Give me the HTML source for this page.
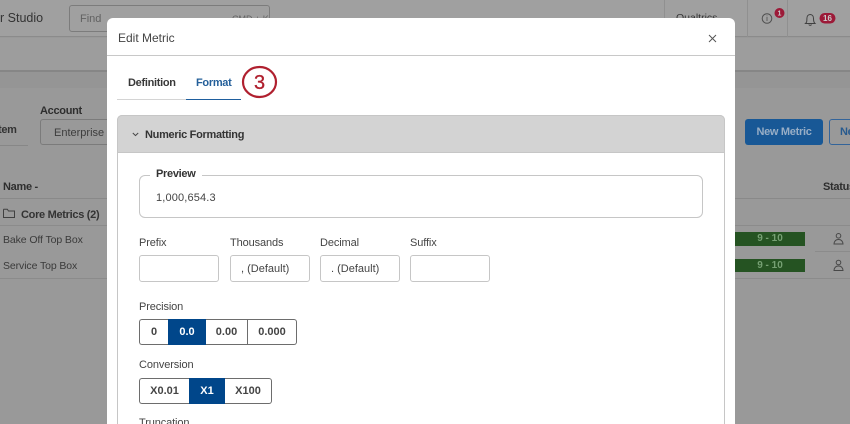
<!DOCTYPE html>
<html style="height:424px;overflow:hidden"><head><meta charset="utf-8">
<style>
html,body{margin:0;padding:0}
body{width:850px;height:424px;background:#999;font-family:"Liberation Sans",sans-serif;color:#2b2b2b;font-size:11px}
#w{position:absolute;left:0;top:0;width:850px;height:424px;overflow:hidden;background:#999}
.a{position:absolute;white-space:nowrap;line-height:14px}
.b{position:absolute;box-sizing:border-box}
.lbl{color:#444;font-size:11px;letter-spacing:-.12px}
.t{font-weight:bold;letter-spacing:-.3px}
.inp{position:absolute;box-sizing:border-box;top:255px;height:27px;width:80px;border:1px solid #c6c6c6;border-radius:3px;background:#fff;color:#444;line-height:27px;padding-left:10px;font-size:11px}
.seg{position:absolute;box-sizing:border-box;height:26px;line-height:25px;text-align:center;font-size:11px;font-weight:bold;color:#444;background:#fff;border:1px solid #6d6d6d}
.on{background:#00468a;color:#fff;border-color:#00468a}
.r{font-size:10.5px;color:#3a3a3a;letter-spacing:-.1px}
</style></head><body><div id="w">
<!-- background -->
<div class="b" style="left:0;top:0;width:850px;height:37px;background:#a0a0a0;border-bottom:1px solid #8b8b8b"></div>
<div class="b" style="left:0;top:38px;width:850px;height:34px;background:#9d9d9d;border-bottom:2px solid #868686"></div>
<div class="b" style="left:0;top:72px;width:850px;height:16px;background:#959595"></div>
<div class="a" style="left:0;top:11px;font-size:12.5px;color:#333">r Studio</div>
<div class="b" style="left:69px;top:5px;width:201px;height:27px;border:1px solid #7c7c7c;border-radius:3px"></div>
<div class="a" style="left:80px;top:12px;color:#626262;font-size:11px">Find</div>
<div class="a" style="left:232px;top:12px;color:#626262;font-size:9px">CMD + K</div>
<div class="b" style="left:664px;top:0;width:1px;height:37px;background:#909090"></div>
<div class="b" style="left:747px;top:0;width:1px;height:37px;background:#909090"></div>
<div class="b" style="left:787px;top:0;width:1px;height:37px;background:#909090"></div>
<div class="a" style="left:676px;top:11px;color:#333;font-size:10.5px">Qualtrics</div>
<svg class="b" style="left:755px;top:6px" width="90" height="26" viewBox="0 0 90 26" fill="none">
<circle cx="12" cy="12.500" r="4.800" stroke="#505050" stroke-width="1"/><path d="M12 11v4M12 9.500v.8" stroke="#505050" stroke-width=".8"/>
<circle cx="24.500" cy="7" r="5" fill="#9c1a38"/><text x="24.500" y="9.500" font-size="7" font-weight="bold" fill="#ccc" text-anchor="middle" font-family="Liberation Sans">1</text>
<path d="M50.500 17.500h9.500c-1.300-1.200-1.500-2.200-1.500-5 0-2.400-1.300-4-3.300-4s-3.300 1.600-3.300 4c0 2.800-.1 3.800-1.400 5zM53.800 18.500c.4 1.200 2.200 1.200 2.700 0" stroke="#404040" stroke-width="1"/>
<rect x="64.500" y="7" width="16" height="10.500" rx="5.200" fill="#9c1a38"/><text x="72.500" y="15" font-size="8" font-weight="bold" fill="#ccc" text-anchor="middle" font-family="Liberation Sans">16</text>
</svg>
<div class="a t" style="left:-2px;top:123px;color:#333">tem</div>
<div class="b" style="left:0;top:145px;width:28px;height:1px;background:#878787"></div>
<div class="a t" style="left:40px;top:104px;color:#2e2e2e">Account</div>
<div class="b" style="left:40px;top:119px;width:80px;height:26px;border:1px solid #7b7b7b;border-radius:3px"></div>
<div class="a" style="left:54px;top:126px;font-size:11px;color:#3d3d3d">Enterprise account</div>
<div class="a t" style="left:3px;top:180px;color:#2e2e2e">Name -</div>
<div class="b" style="left:0;top:198px;width:850px;height:1px;background:#898989"></div>
<svg class="b" style="left:3px;top:208px" width="13" height="11" viewBox="0 0 13 11" fill="none"><path d="M.5 2V9.500H11.500V3H5.500L4.300 1.200H.8z" stroke="#404040"/></svg>
<div class="a t" style="left:21px;top:208px;color:#333">Core Metrics (2)</div>
<div class="b" style="left:0;top:225px;width:850px;height:1px;background:#8b8b8b"></div>
<div class="a r" style="left:3px;top:233px">Bake Off Top Box</div>
<div class="b" style="left:815px;top:251px;width:35px;height:1px;background:#8b8b8b"></div>
<div class="a r" style="left:3px;top:259px">Service Top Box</div>
<div class="b" style="left:0;top:278px;width:850px;height:1px;background:#8b8b8b"></div>
<div class="b t" style="left:745px;top:119px;width:78px;height:26px;border-radius:3px;background:#185896;color:#98aec6;font-size:11px;line-height:26px;text-align:center">New Metric</div>
<div class="b t" style="left:829px;top:119px;width:40px;height:26px;border-radius:3px;border:1px solid #33649a;color:#285a8e;font-size:11px;line-height:24px;padding-left:10px">New</div>
<div class="a t" style="left:823px;top:180px;color:#2e2e2e">Status</div>
<div class="b" style="left:735px;top:232px;width:70px;height:14px;background:#255322;color:#76a073;font-weight:bold;font-size:10px;line-height:14px;text-align:center">9 - 10</div>
<div class="b" style="left:735px;top:259px;width:70px;height:13px;background:#255322;color:#76a073;font-weight:bold;font-size:10px;line-height:14px;text-align:center">9 - 10</div>
<svg class="b" style="left:832px;top:233px" width="14" height="40" viewBox="0 0 14 40" fill="none" stroke="#484848"><circle cx="6.500" cy="2.800" r="2.300"/><path d="M2 11c.3-3 2-4.500 4.500-4.500S10.700 8 11 11z"/><circle cx="6.500" cy="29.500" r="2.300"/><path d="M2 37.500c.3-3 2-4.500 4.500-4.500S10.700 34.500 11 37.500z"/></svg>

<!-- modal -->
<div class="b" style="left:107px;top:18px;width:628px;height:406px;background:#fff;border-radius:6px 6px 0 0"></div>
<div class="b" style="left:107px;top:55px;width:628px;height:1px;background:#c8c8c8"></div>
<div class="a" style="left:118px;top:31px;font-size:12px;color:#444">Edit Metric</div>
<svg class="b" style="left:708px;top:34px" width="9" height="9" viewBox="0 0 9 9"><path d="M1 1l7 7M8 1L1 8" stroke="#555" stroke-width="1"/></svg>

<div class="a t" style="left:128px;top:76px;color:#383838">Definition</div>
<div class="a t" style="left:196px;top:76px;color:#25609a">Format</div>
<div class="b" style="left:117px;top:99px;width:69px;height:1px;background:#d4d4d4"></div>
<div class="b" style="left:186px;top:99px;width:55px;height:1px;background:#1f5f9e"></div>
<svg class="b" style="left:241px;top:65px" width="38" height="35" viewBox="0 0 38 35" fill="none"><ellipse cx="18.500" cy="17" rx="16.500" ry="15" stroke="#b0202f" stroke-width="2.200"/><text x="18.500" y="24" font-size="20" fill="#b0202f" stroke="#b0202f" stroke-width=".3" text-anchor="middle" font-family="Liberation Sans">3</text></svg>

<div class="b" style="left:117px;top:115px;width:608px;height:320px;border:1px solid #c6c6c6;border-radius:5px 5px 0 0"></div>
<div class="b" style="left:117px;top:115px;width:608px;height:38px;background:#d3d3d3;border:1px solid #c6c6c6;border-radius:5px 5px 0 0"></div>
<svg class="b" style="left:132px;top:132px" width="7" height="5" viewBox="0 0 7 5"><path d="M.8 1l2.700 2.600L6.200 1" stroke="#444" fill="none"/></svg>
<div class="a t" style="left:145px;top:128px;color:#333">Numeric Formatting</div>

<div class="b" style="left:139px;top:175px;width:564px;height:43px;border:1px solid #c6c6c6;border-radius:6px"></div>
<div class="b" style="left:150px;top:170px;width:52px;height:10px;background:#fff"></div>
<div class="a t" style="left:156px;top:167px;color:#333">Preview</div>
<div class="a" style="left:156px;top:191px;font-size:11px;color:#444;letter-spacing:.15px">1,000,654.3</div>

<div class="a lbl" style="left:139px;top:236px">Prefix</div>
<div class="a lbl" style="left:230px;top:236px">Thousands</div>
<div class="a lbl" style="left:320px;top:236px">Decimal</div>
<div class="a lbl" style="left:410px;top:236px">Suffix</div>
<div class="inp" style="left:139px"></div>
<div class="inp" style="left:230px">, (Default)</div>
<div class="inp" style="left:320px">. (Default)</div>
<div class="inp" style="left:410px"></div>

<div class="a lbl" style="left:139px;top:300px">Precision</div>
<div class="seg" style="left:139px;top:319px;width:29px;border-radius:3px 0 0 3px;border-right:0">0</div>
<div class="seg on" style="left:168px;top:319px;width:38px">0.0</div>
<div class="seg" style="left:206px;top:319px;width:42px;border-left:0;border-right:1px solid #6d6d6d">0.00</div>
<div class="seg" style="left:248px;top:319px;width:49px;border-left:0;border-radius:0 3px 3px 0">0.000</div>

<div class="a lbl" style="left:139px;top:358px">Conversion</div>
<div class="seg" style="left:139px;top:378px;width:50px;border-radius:3px 0 0 3px;border-right:0">X0.01</div>
<div class="seg on" style="left:189px;top:378px;width:36px">X1</div>
<div class="seg" style="left:225px;top:378px;width:47px;border-left:0;border-radius:0 3px 3px 0">X100</div>

<div class="a lbl" style="left:139px;top:416px">Truncation</div>
</div></body></html>
